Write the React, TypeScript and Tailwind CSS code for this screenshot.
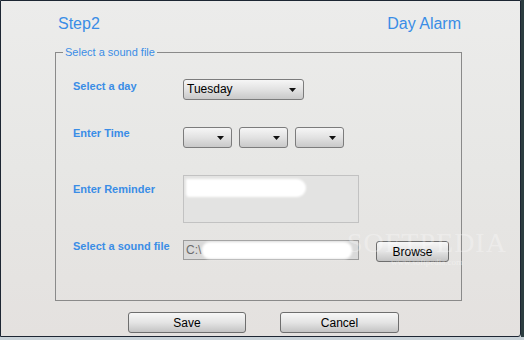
import React from "react";

const font = { fontFamily: '"Liberation Sans", Arial, sans-serif' };

function Caret() {
  return (
    <svg width="7" height="4" viewBox="0 0 7 4" className="shrink-0">
      <path d="M0 0h7L3.5 4z" fill="#111" />
    </svg>
  );
}

function Combo({ w, text }: { w: string; text?: string }) {
  return (
    <div
      className={`${w} h-[21px] flex items-center justify-between pl-[3px] pr-[7px] rounded-[3px] border border-[#7c7c7c] bg-gradient-to-b from-[#f6f6f6] via-[#e2e2e2] to-[#c9c9c9] text-[12px] font-normal text-black`}
    >
      <span>{text}</span>
      <Caret />
    </div>
  );
}

function Btn({ label, w }: { label: string; w: string }) {
  return (
    <button
      className={`${w} h-[21px] rounded-[3px] border border-[#6e6e6e] bg-gradient-to-b from-[#f7f7f7] via-[#e4e4e4] to-[#c4c4c4] text-[12px] font-normal text-black leading-none`}
    >
      {label}
    </button>
  );
}

export default function App() {
  return (
    <div className="w-[524px] h-[340px] bg-[#c9d2d8] overflow-hidden" style={font}>
      <div className="flex h-[337px]">
        <div className="relative w-[521px] h-[337px] border border-[#1d2633] rounded-br-[3px] bg-gradient-to-b from-[#ececeb] via-[#e7e7e5] to-[#e4e1df]">
          {/* header */}
          <div className="ml-[54px] w-[407px] mt-[14px] flex justify-between items-start text-[16px] leading-[18px] text-[#3a8de6]">
            <span className="pl-[3px]">Step2</span>
            <span className="pr-[1px]">Day Alarm</span>
          </div>

          {/* group box */}
          <fieldset className="ml-[54px] mt-[13px] w-[407px] h-[255px] border border-[#8a8a8a]">
            <legend className="ml-[7px] px-[2px] text-[11px] leading-[13px] text-[#3a8de6]">
              Select a sound file
            </legend>

            <div className="flex flex-col pl-[17px] text-[11px] leading-[13px] font-bold text-[#3a8de6]">
              <div className="flex items-start mt-[20px]">
                <span className="w-[110px] pt-[1px]">Select a day</span>
                <Combo w="w-[121px]" text="Tuesday" />
              </div>

              <div className="flex items-start mt-[27px]">
                <span className="w-[110px]">Enter Time</span>
                <div className="flex gap-[7px]">
                  <Combo w="w-[49px]" />
                  <Combo w="w-[49px]" />
                  <Combo w="w-[49px]" />
                </div>
              </div>

              <div className="flex items-start mt-[27px]">
                <span className="w-[110px] mt-[8px]">Enter Reminder</span>
                <div className="relative w-[176px] h-[48px] border border-[#c2c2c2] bg-[#e3e3e2]">
                  <div className="absolute left-[2px] top-[3px] w-[120px] h-[18px] bg-white rounded-r-[10px] rounded-bl-[4px] blur-[1px]" />
                </div>
              </div>

              <div className="flex items-start mt-[17px]">
                <span className="w-[110px] whitespace-nowrap">Select a sound file</span>
                <div className="relative w-[176px] h-[20px] border border-[#9c9c9c] bg-[#dadada] flex items-center pl-[2px] text-[12px] font-normal text-[#6c6c6c]">
                  <span>C:\</span>
                  <div className="absolute left-[18px] top-[1px] w-[150px] h-[17px] bg-white rounded-[8px] blur-[1px]" />
                </div>
                <div className="ml-[17px] mt-[1px]">
                  <Btn label="Browse" w="w-[73px]" />
                </div>
              </div>
            </div>
          </fieldset>

          {/* footer buttons */}
          <div className="flex mt-[11px] ml-[127px] gap-[34px]">
            <Btn label="Save" w="w-[118px]" />
            <Btn label="Cancel" w="w-[119px]" />
          </div>

          {/* watermark */}
          <div className="absolute left-[346px] top-[228px] pointer-events-none select-none text-center" style={{ fontFamily: '"Liberation Serif", serif' }}>
            <div className="text-[28px] leading-[28px] tracking-[1px] text-white/30">SOFTPEDIA</div>
            <div className="text-[9px] leading-[10px] text-white/40">www.softpedia.com</div>
          </div>
        </div>
        <div className="w-[3px] h-full bg-[#2c3d40]" />
      </div>
    </div>
  );
}
